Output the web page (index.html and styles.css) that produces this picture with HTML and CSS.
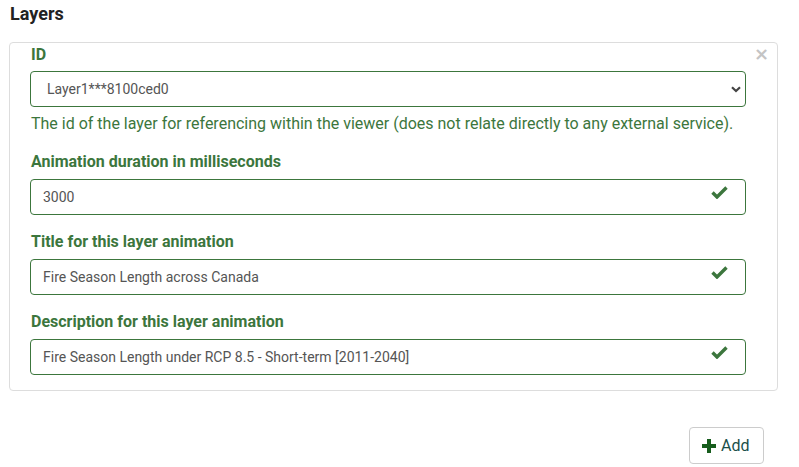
FILE: index.html
```html
<!DOCTYPE html>
<html>
<head>
<meta charset="utf-8">
<link rel="stylesheet" href="styles.css">
</head>
<body>
<div class="page">
  <h3 class="title">Layers</h3>
  <div class="card">
    <button class="close" type="button">&times;</button>
    <div class="group">
      <label class="label">ID</label>
      <div class="select-wrap">
        <select class="control select"><option>Layer1***8100ced0</option></select>
        <svg class="chevron" width="10" height="7" viewBox="0 0 10 7"><path d="M1 1.2 L5 5 L9 1.2" fill="none" stroke="#444" stroke-width="2.2"/></svg>
      </div>
      <div class="help">The id of the layer for referencing within the viewer (does not relate directly to any external service).</div>
    </div>
    <div class="group">
      <label class="label">Animation duration in milliseconds</label>
      <div class="input-wrap">
        <input class="control" value="3000">
        <svg class="check" width="17" height="13" viewBox="0 0 17 13"><path d="M1.5 6.5 L6 11 L15.5 1.5" fill="none" stroke="#3c763d" stroke-width="3.4"/></svg>
      </div>
    </div>
    <div class="group">
      <label class="label">Title for this layer animation</label>
      <div class="input-wrap">
        <input class="control" value="Fire Season Length across Canada">
        <svg class="check" width="17" height="13" viewBox="0 0 17 13"><path d="M1.5 6.5 L6 11 L15.5 1.5" fill="none" stroke="#3c763d" stroke-width="3.4"/></svg>
      </div>
    </div>
    <div class="group">
      <label class="label">Description for this layer animation</label>
      <div class="input-wrap">
        <input class="control" value="Fire Season Length under RCP 8.5 - Short-term [2011-2040]">
        <svg class="check" width="17" height="13" viewBox="0 0 17 13"><path d="M1.5 6.5 L6 11 L15.5 1.5" fill="none" stroke="#3c763d" stroke-width="3.4"/></svg>
      </div>
    </div>
  </div>
  <div class="actions">
    <button class="add" type="button">
      <svg width="14" height="14" viewBox="0 0 14 14"><path d="M7 0 V14 M0 7 H14" stroke="#175d1d" stroke-width="4"/></svg>
      <span>Add</span>
    </button>
  </div>
</div>
</body>
</html>
```

FILE: styles.css
```css
* { box-sizing: border-box; }
html, body { margin: 0; padding: 0; background: #fff; }
body { font-family: Roboto, "Liberation Sans", sans-serif; color: #333; }
.page { padding: 0 21px 0 9px; }
.title {
  margin: 0;
  padding: 2px 0 0 1px;
  height: 42px;
  font-size: 18px;
  line-height: 24px;
  font-weight: 700;
  color: #222;
}
.card {
  position: relative;
  border: 1px solid #ddd;
  border-radius: 4px;
  padding: 0 31px 0 20px;
}
.close {
  position: absolute;
  top: 2px;
  right: 8px;
  border: 0;
  background: none;
  padding: 0;
  font-family: "DejaVu Sans", sans-serif;
  font-size: 18px;
  line-height: 18px;
  font-weight: 700;
  color: #c4c4c4;
}
.group { margin-bottom: 15px; }
.label {
  display: block;
  font-size: 16px;
  line-height: 24px;
  font-weight: 700;
  color: #3c763d;
  margin-bottom: 5px;
  padding-left: 1px;
}
.group:first-of-type .label { line-height: 23px; }
.input-wrap, .select-wrap { position: relative; }
.control {
  display: block;
  width: 100%;
  height: 36px;
  border: 1px solid #3c763d;
  border-radius: 4px;
  padding: 0 12px;
  font-family: Roboto, "Liberation Sans", sans-serif;
  font-size: 14px;
  color: #555;
  background: #fff;
  outline: none;
}
.select {
  appearance: none;
  -webkit-appearance: none;
  padding-left: 16px;
}
.chevron { position: absolute; right: 5px; top: 15px; }
.check { position: absolute; right: 18px; top: 7px; }
.help {
  margin-top: 6px;
  font-size: 16px;
  line-height: 22px;
  color: #3c763d;
  padding-left: 1px;
}
.actions {
  display: flex;
  justify-content: flex-end;
  padding-top: 36px;
  padding-right: 14px;
}
.add {
  display: flex;
  align-items: center;
  gap: 5px;
  height: 37px;
  width: 75px;
  padding: 0 0 0 12px;
  border: 1px solid #ccc;
  border-radius: 4px;
  background: #fff;
  font-family: Roboto, "Liberation Sans", sans-serif;
  font-size: 16px;
  color: #1a4f4a;
}
```
